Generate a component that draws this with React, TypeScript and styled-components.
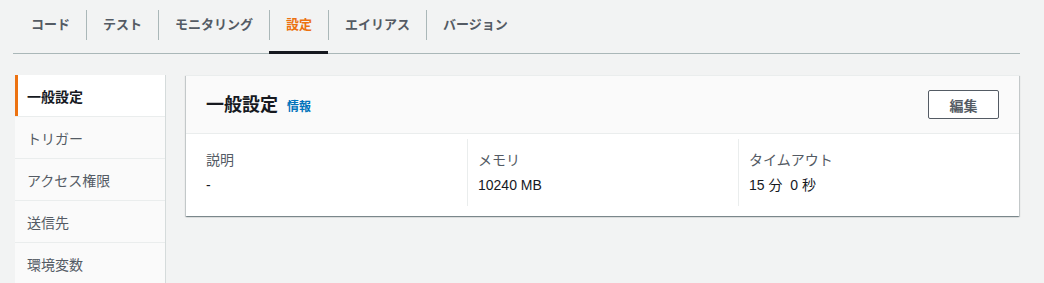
import React from "react";
import styled, { createGlobalStyle } from "styled-components";

const GlobalStyle = createGlobalStyle`
  html, body {
    margin: 0;
    padding: 0;
    background: #f2f3f3;
    font-family: "Liberation Sans", "Noto Sans CJK JP", sans-serif;
    color: #16191f;
    overflow: hidden;
  }
  * { box-sizing: border-box; }
`;

const Page = styled.div`
  display: flex;
  flex-direction: column;
  gap: 21px;
`;

const TabBar = styled.nav`
  display: flex;
  margin: 0 24px 0 13px;
  padding-left: 2px;
  border-bottom: 1px solid #aab7b8;
`;

const Tab = styled.div<{ $active?: boolean }>`
  display: flex;
  flex-direction: column;
  padding: 10px 0 11px;
  margin-bottom: -1px;
  border-bottom: 3px solid ${(p) => (p.$active ? "#16191f" : "transparent")};
`;

const TabLabel = styled.span<{ $active?: boolean; $first?: boolean }>`
  height: 30px;
  line-height: 30px;
  padding: 0 16px;
  border-left: ${(p) => (p.$first ? "none" : "1px solid #aab7b8")};
  font-size: 13px;
  font-weight: 700;
  color: ${(p) => (p.$active ? "#ec7211" : "#545b64")};
  white-space: nowrap;
`;

const Content = styled.div`
  display: flex;
  align-items: flex-start;
  gap: 20px;
  padding: 0 25px 0 15px;
`;

const SideNav = styled.ul`
  list-style: none;
  margin: 0;
  padding: 0;
  width: 151px;
  flex: none;
  display: flex;
  flex-direction: column;
  background: #eaeded;
  gap: 1px;
  border-left: 1px solid #eaeded;
  border-right: 1px solid #d5dbdb;
`;

const SideItem = styled.li<{ $active?: boolean }>`
  height: 41px;
  display: flex;
  align-items: center;
  padding-left: 9px;
  margin-left: -1px;
  border-left: 3px solid ${(p) => (p.$active ? "#ec7211" : "transparent")};
  background: ${(p) => (p.$active ? "#ffffff" : "#fafafa")};
  font-size: 14px;
  font-weight: ${(p) => (p.$active ? 700 : 400)};
  color: ${(p) => (p.$active ? "#16191f" : "#545b64")};
  white-space: nowrap;
`;

const Card = styled.section`
  flex: 1;
  background: #ffffff;
  box-shadow: 0 1px 1px 0 rgba(0, 28, 36, 0.3), 1px 1px 1px 0 rgba(0, 28, 36, 0.15),
    -1px 1px 1px 0 rgba(0, 28, 36, 0.15);
  border-top: 1px solid #eaeded;
`;

const CardHeader = styled.header`
  height: 58px;
  display: flex;
  align-items: center;
  justify-content: space-between;
  padding: 0 20px;
  background: #fafafa;
  border-bottom: 1px solid #eaeded;
`;

const TitleGroup = styled.div`
  display: flex;
  align-items: baseline;
  gap: 9px;
`;

const Title = styled.h2`
  margin: 0;
  font-size: 18px;
  font-weight: 700;
  line-height: 22px;
  color: #16191f;
`;

const InfoLink = styled.a`
  font-size: 12px;
  font-weight: 700;
  color: #0073bb;
  text-decoration: none;
`;

const EditButton = styled.button`
  height: 29px;
  width: 71px;
  padding: 0;
  border: 1px solid #545b64;
  border-radius: 2px;
  background: #ffffff;
  font-family: inherit;
  font-size: 14px;
  font-weight: 700;
  color: #545b64;
`;

const CardBody = styled.div`
  display: grid;
  grid-template-columns: repeat(3, 1fr);
  padding: 5px 10px 10px;
`;

const Column = styled.div<{ $first?: boolean }>`
  display: flex;
  flex-direction: column;
  gap: 5px;
  padding: 11px 10px;
  border-left: ${(p) => (p.$first ? "none" : "1px solid #eaeded")};
`;

const Label = styled.div`
  font-size: 14px;
  line-height: 20px;
  color: #545b64;
`;

const Value = styled.div`
  font-size: 14px;
  line-height: 20px;
  color: #16191f;
  white-space: pre;
`;

const tabs = ["コード", "テスト", "モニタリング", "設定", "エイリアス", "バージョン"];
const sideItems = ["一般設定", "トリガー", "アクセス権限", "送信先", "環境変数"];
const fields = [
  { label: "説明", value: "-" },
  { label: "メモリ", value: "10240 MB" },
  { label: "タイムアウト", value: "15 分  0 秒" },
];

export default function App() {
  return (
    <>
      <GlobalStyle />
      <Page>
        <TabBar>
          {tabs.map((t, i) => (
            <Tab key={t} $active={t === "設定"}>
              <TabLabel $first={i === 0} $active={t === "設定"}>
                {t}
              </TabLabel>
            </Tab>
          ))}
        </TabBar>
        <Content>
          <SideNav>
            {sideItems.map((s, i) => (
              <SideItem key={s} $active={i === 0}>
                {s}
              </SideItem>
            ))}
          </SideNav>
          <Card>
            <CardHeader>
              <TitleGroup>
                <Title>一般設定</Title>
                <InfoLink href="#">情報</InfoLink>
              </TitleGroup>
              <EditButton>編集</EditButton>
            </CardHeader>
            <CardBody>
              {fields.map((f, i) => (
                <Column key={f.label} $first={i === 0}>
                  <Label>{f.label}</Label>
                  <Value>{f.value}</Value>
                </Column>
              ))}
            </CardBody>
          </Card>
        </Content>
      </Page>
    </>
  );
}
